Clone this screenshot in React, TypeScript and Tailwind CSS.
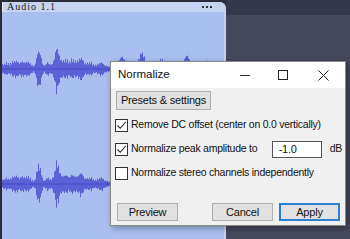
import React from 'react'

const W = 222

// deterministic envelope for the speech waveform
const bumps: [number, number, number][] = [
  [4, 4, 3],
  [13, 7, 3],
  [21, 6, 3],
  [27, 5, 2],
  [37, 21, 2],
  [46, 5, 2],
  [55, 23, 2.3],
  [63, 8, 3],
  [71, 8, 3],
  [79, 11, 2.5],
  [88, 5, 3],
  [99, 5, 3],
  [120, 12, 4],
  [140, 18, 3],
  [160, 9, 4],
  [185, 14, 3],
  [205, 7, 4],
]

function amp(x: number) {
  let a = 3
  for (const [c, h, s] of bumps) {
    a += h * Math.exp(-((x - c) * (x - c)) / (2 * s * s))
  }
  const n = 0.8 + 0.2 * Math.abs(Math.sin(x * 1.7) * Math.cos(x * 0.63))
  return a * n
}

function Wave({ seed }: { seed: number }) {
  const lines: string[] = []
  for (let x = 0.5; x < W; x += 1) {
    const a = amp(x)
    const up = a * (0.85 + 0.15 * Math.sin(x * 3.1 + seed))
    const dn = a * (0.85 + 0.15 * Math.cos(x * 2.3 + seed))
    lines.push(`M${x} ${(57 - up).toFixed(1)}V${(57 + dn).toFixed(1)}`)
  }
  return (
    <svg width={W} height={115} className="block">
      <path d={lines.join('')} stroke="#5b62d6" strokeWidth="1" fill="none" />
      <path d={`M0 57H${W}`} stroke="#4f55cf" strokeWidth="2" />
    </svg>
  )
}

function Check({ checked }: { checked: boolean }) {
  return (
    <div className="w-[13px] h-[13px] border border-[#333] bg-white flex items-center justify-center shrink-0">
      {checked && (
        <svg width="11" height="11" viewBox="0 0 11 11">
          <path d="M1.5 5.5 L4.2 8.3 L9.6 2" stroke="#222" strokeWidth="1.1" fill="none" />
        </svg>
      )}
    </div>
  )
}

function Btn({ label, primary, className }: { label: string; primary?: boolean; className?: string }) {
  return (
    <div
      className={`h-[18px] flex items-center justify-center whitespace-nowrap bg-[#e1e1e1] text-[11px] tracking-[-0.2px] text-[#111] ${
        primary ? 'border-2 border-[#2a7fd4]' : 'border border-[#adadad]'
      } ${className ?? ''}`}
    >
      {label}
    </div>
  )
}

export default function App() {
  return (
    <div
      className="relative w-[350px] h-[239px] overflow-hidden bg-[#44475a] flex"
      style={{ fontFamily: '"Liberation Sans", Arial, sans-serif' }}
    >
      {/* Track */}
      <div className="w-[226px] h-full flex flex-col bg-[#2a2c3a] pl-[2px] pt-[2px]">
        <div className="flex-1 flex flex-col rounded-tr-[6px] overflow-hidden border-r-2 border-[#c7d1ee] bg-[#a9bff0]">
          <div className="h-[13px] bg-[#c6d3f1] flex items-center justify-between pl-[4px] pr-[12px] border-l border-[#e6ecfa]">
            <span
              className="text-[10px] leading-none text-[#222] tracking-[1px]"
              style={{ fontFamily: '"Liberation Serif", serif' }}
            >
              Audio 1.1
            </span>
            <div className="flex gap-[2px]">
              <div className="w-[2px] h-[2px] bg-[#333]" />
              <div className="w-[2px] h-[2px] bg-[#333]" />
              <div className="w-[2px] h-[2px] bg-[#333]" />
            </div>
          </div>
          <div className="h-[115px]">
            <Wave seed={0} />
          </div>
          <div className="h-[1px] bg-[#3c4258]" />
          <div className="flex-1">
            <Wave seed={1.3} />
          </div>
        </div>
      </div>
      <div className="flex-1 flex flex-col">
        <div className="h-[15px] bg-[#35374a]" />
        <div className="flex-1 bg-[#45485b]" />
      </div>

      {/* Normalize dialog */}
      <div className="absolute left-[110px] top-[61px] w-[236px] h-[165px] border border-[#8a8a8a] bg-[#f0f0f0] shadow-[2px_2px_6px_rgba(0,0,0,0.35)] flex flex-col">
        <div className="h-[26px] bg-white flex items-center shrink-0">
          <span className="ml-[7px] text-[11.5px] text-[#111]">Normalize</span>
          <div className="ml-auto flex items-center h-full">
            <div className="w-[40px] flex justify-center">
              <div className="w-[10px] h-px bg-[#333]" />
            </div>
            <div className="w-[36px] flex justify-center">
              <div className="w-[10px] h-[10px] border border-[#222]" />
            </div>
            <div className="w-[44px] flex justify-center">
              <svg width="11" height="11" viewBox="0 0 11 11">
                <path d="M0.5 0.5 L10.5 10.5 M10.5 0.5 L0.5 10.5" stroke="#222" strokeWidth="1" />
              </svg>
            </div>
          </div>
        </div>
        <div className="flex-1 flex flex-col pl-[4px] text-[10.5px] tracking-[-0.25px] text-[#111] whitespace-nowrap">
          <Btn label="Presets & settings" className="mt-[3px] ml-[1px] w-[95px] h-[19px]" />
          <div className="mt-[3px] h-6 flex items-center gap-[3px]">
            <Check checked />
            <span>Remove DC offset (center on 0.0 vertically)</span>
          </div>
          <div className="h-6 flex items-center gap-[3px]">
            <Check checked />
            <span>Normalize peak amplitude to</span>
            <div className="ml-auto w-[50px] h-[17px] border border-[#555] bg-white pl-[6px] flex items-center text-[11px]">
              -1.0
            </div>
            <span className="ml-[5px] mr-[3px]">dB</span>
          </div>
          <div className="h-6 flex items-center gap-[3px]">
            <Check checked={false} />
            <span>Normalize stereo channels independently</span>
          </div>
          <div className="mt-[18px] flex">
            <Btn label="Preview" className="ml-[2px] w-[61px]" />
            <Btn label="Cancel" className="ml-[34px] w-[61px]" />
            <Btn label="Apply" primary className="ml-[6px] w-[61px]" />
          </div>
        </div>
      </div>
    </div>
  )
}
